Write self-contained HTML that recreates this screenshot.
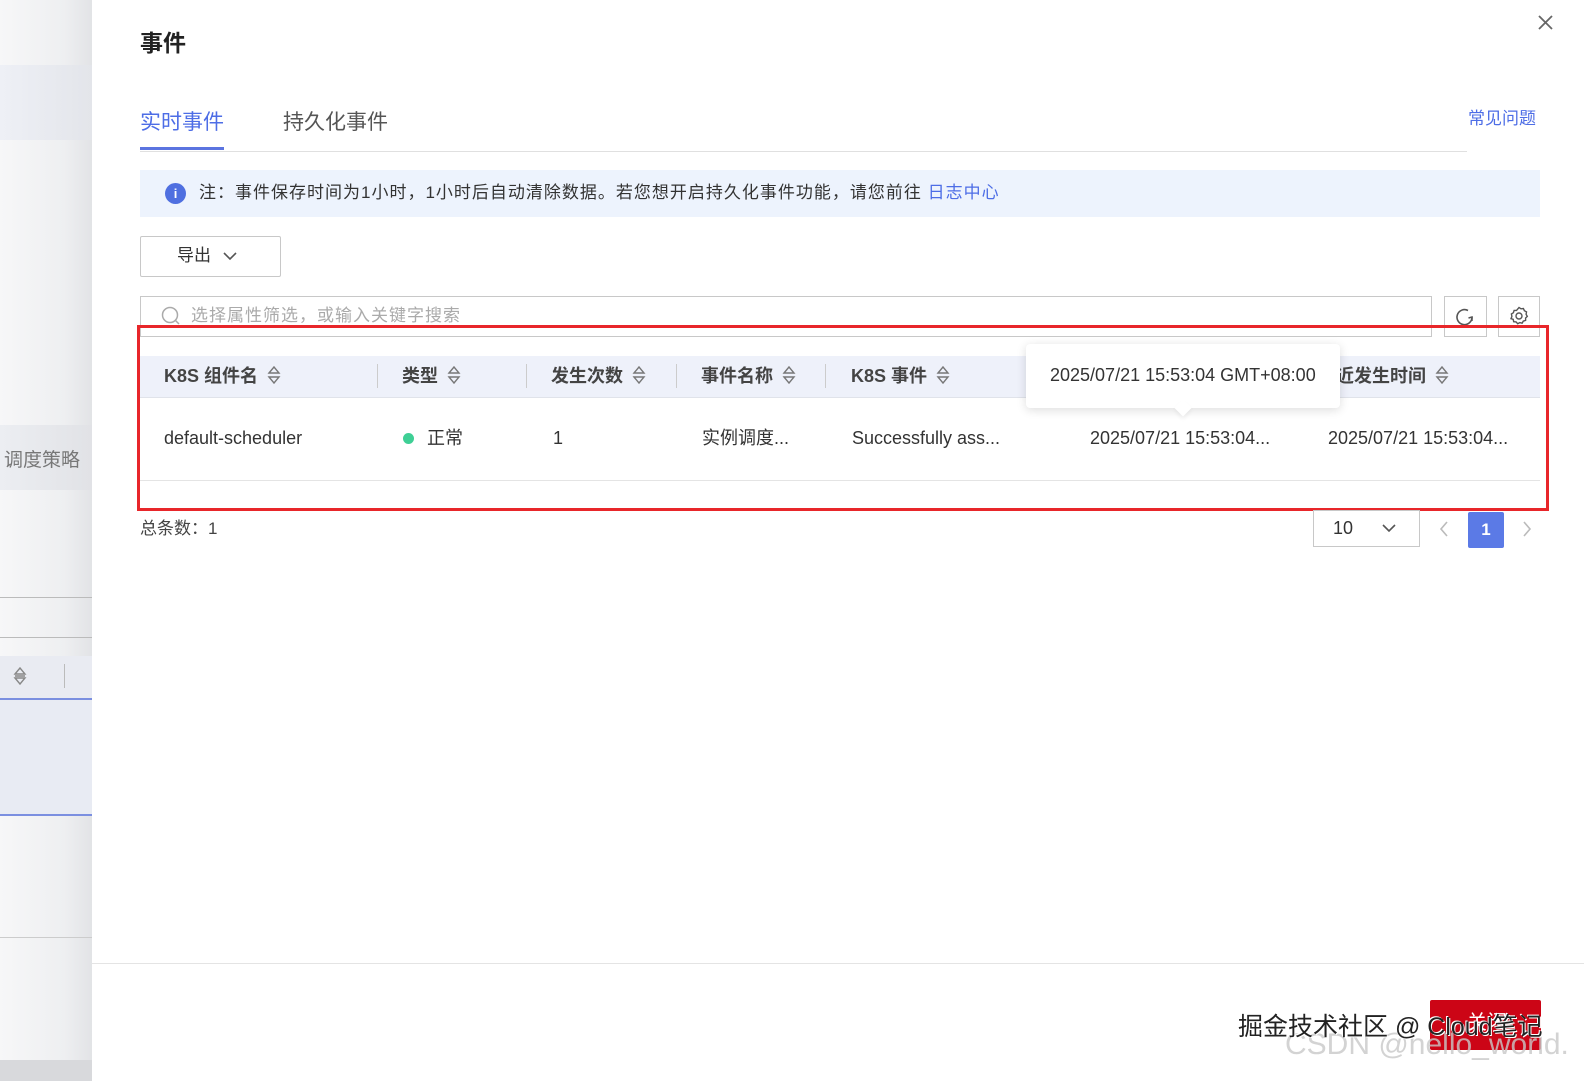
<!DOCTYPE html>
<html><head><meta charset="utf-8"><style>
*{margin:0;padding:0;box-sizing:border-box}
body{width:1584px;height:1081px;position:relative;overflow:hidden;background:#fff;font-family:"Liberation Sans","Noto Sans CJK SC",sans-serif;color:#333}
.a{position:absolute;white-space:nowrap;line-height:22px}
.left{position:absolute;left:0;top:0;width:92px;height:1081px;background:linear-gradient(90deg,#f7f7f8 0%,#eeeff1 70%,#e2e3e6 100%)}
.sort{display:inline-block;vertical-align:-3px;margin-left:8px}
.hd{font-size:18px;font-weight:bold;color:#444;top:365px}
.sep{position:absolute;top:364px;width:1px;height:24px;background:#ccc}
.cell{font-size:18px;color:#333;top:427px}
</style></head><body>
<div class="left">
  <div class="a" style="left:0;top:65px;width:92px;height:75px;background:linear-gradient(90deg,#eef0f6,#e3e5ea)"></div>
  <div class="a" style="left:0;top:425px;width:92px;height:65px;background:linear-gradient(90deg,#eceef2,#e1e2e6)"></div>
  <div class="a" style="left:4px;top:450px;font-size:19px;color:#777">调度策略</div>
  <div class="a" style="left:0;top:597px;width:92px;height:1px;background:#bbb"></div>
  <div class="a" style="left:0;top:637px;width:92px;height:1px;background:#bbb"></div>
  <div class="a" style="left:0;top:656px;width:92px;height:42px;background:#e9ebf2"></div>
  <svg class="a" style="left:12px;top:666px" width="16" height="20"><path d="M3 8L8 2L13 8ZM3 12L8 18L13 12Z M3 10H13" stroke="#888" stroke-width="1.4" fill="none"/></svg>
  <div class="a" style="left:64px;top:664px;width:1px;height:24px;background:#bbb"></div>
  <div class="a" style="left:0;top:698px;width:92px;height:118px;background:#e8ebf3;border-top:2px solid #7b8fe0;border-bottom:2px solid #7b8fe0"></div>
  <div class="a" style="left:0;top:937px;width:92px;height:1px;background:#ccc"></div>
  <div class="a" style="left:0;top:1060px;width:92px;height:21px;background:#d8d9dc"></div>
</div>

<div class="a" style="left:140px;top:32px;font-size:23px;font-weight:bold;color:#222">事件</div>
<svg class="a" style="left:1537px;top:14px" width="17" height="17"><path d="M2 2L15 15M15 2L2 15" stroke="#666" stroke-width="1.8"/></svg>

<div class="a" style="left:140px;top:112px;font-size:21px;color:#4d6de6">实时事件</div>
<div class="a" style="left:283px;top:112px;font-size:21px;color:#555">持久化事件</div>
<div class="a" style="left:140px;top:151px;width:1327px;height:1px;background:#e0e0e0"></div>
<div class="a" style="left:140px;top:147px;width:84px;height:3px;background:#5b74e0"></div>
<div class="a" style="left:1468px;top:108px;font-size:17px;color:#4d6de6">常见问题</div>

<div class="a" style="left:140px;top:170px;width:1400px;height:47px;background:#edf3fd"></div>
<div class="a" style="left:165px;top:183px;width:21px;height:21px;border-radius:50%;background:#4f6fe0;color:#fff;font-size:13px;font-weight:bold;text-align:center;line-height:21px">i</div>
<div class="a" style="left:199px;top:182px;font-size:17px;letter-spacing:1px;color:#333">注：事件保存时间为1小时，1小时后自动清除数据。若您想开启持久化事件功能，请您前往 <span style="color:#4d6de6">日志中心</span></div>

<div class="a" style="left:140px;top:236px;width:141px;height:41px;border:1px solid #c8c8c8;border-radius:2px"></div>
<div class="a" style="left:177px;top:245px;font-size:17px;color:#333">导出</div>
<svg class="a" style="left:222px;top:250px" width="16" height="12"><path d="M2 3L8 9L14 3" stroke="#555" stroke-width="1.6" fill="none"/></svg>

<div class="a" style="left:140px;top:296px;width:1292px;height:41px;border:1px solid #c8c8c8"></div>
<svg class="a" style="left:160px;top:305px" width="22" height="22"><circle cx="10" cy="10" r="7.5" stroke="#aaa" stroke-width="1.5" fill="none"/><path d="M15.5 15.5L19 19" stroke="#aaa" stroke-width="1.5"/></svg>
<div class="a" style="left:191px;top:305px;font-size:17px;color:#aaa;letter-spacing:1px">选择属性筛选，或输入关键字搜索</div>
<div class="a" style="left:1444px;top:296px;width:43px;height:41px;border:1px solid #c8c8c8"></div>
<svg class="a" style="left:1453px;top:305px" width="24" height="24"><path d="M19 12A7.5 7.5 0 1 1 15 5.5" stroke="#555" stroke-width="1.6" fill="none"/><path d="M19 16L19 12L15.5 13" stroke="#555" stroke-width="1.5" fill="none"/></svg>
<div class="a" style="left:1498px;top:296px;width:42px;height:41px;border:1px solid #c8c8c8"></div>
<svg class="a" style="left:1508px;top:305px" width="22" height="22"><path d="M11 2.5l2 1.3 2.4-.3 1 2.2 2.1 1.2-.4 2.4 1.2 2.1-1.7 1.6v2.4l-2.3.7-1.2 2.1-2.3-.6-2.1 1.1-1.6-1.8-2.4-.2-.5-2.4L3 13.7l.9-2.3-.5-2.4 2-1.3.7-2.3h2.4z" stroke="#555" stroke-width="1.4" fill="none"/><circle cx="11" cy="11" r="3" stroke="#555" stroke-width="1.4" fill="none"/></svg>

<div class="a" style="left:140px;top:356px;width:1400px;height:42px;background:#eef1fa;border-bottom:1px solid #e0e3ea"></div>
<div class="a hd" style="left:164px">K8S 组件名<svg class="sort" width="16" height="20"><path d="M3 8L8 2L13 8ZM3 12L8 18L13 12Z" stroke="#777" stroke-width="1.4" fill="none"/></svg></div>
<div class="sep" style="left:377px"></div>
<div class="a hd" style="left:402px">类型<svg class="sort" width="16" height="20"><path d="M3 8L8 2L13 8ZM3 12L8 18L13 12Z" stroke="#777" stroke-width="1.4" fill="none"/></svg></div>
<div class="sep" style="left:526px"></div>
<div class="a hd" style="left:551px">发生次数<svg class="sort" width="16" height="20"><path d="M3 8L8 2L13 8ZM3 12L8 18L13 12Z" stroke="#777" stroke-width="1.4" fill="none"/></svg></div>
<div class="sep" style="left:676px"></div>
<div class="a hd" style="left:701px">事件名称<svg class="sort" width="16" height="20"><path d="M3 8L8 2L13 8ZM3 12L8 18L13 12Z" stroke="#777" stroke-width="1.4" fill="none"/></svg></div>
<div class="sep" style="left:825px"></div>
<div class="a hd" style="left:851px">K8S 事件<svg class="sort" width="16" height="20"><path d="M3 8L8 2L13 8ZM3 12L8 18L13 12Z" stroke="#777" stroke-width="1.4" fill="none"/></svg></div>
<div class="a hd" style="left:1318px">最近发生时间<svg class="sort" width="16" height="20"><path d="M3 8L8 2L13 8ZM3 12L8 18L13 12Z" stroke="#777" stroke-width="1.4" fill="none"/></svg></div>

<div class="a cell" style="left:164px">default-scheduler</div>
<div class="a" style="left:403px;top:433px;width:11px;height:11px;border-radius:50%;background:#3ecf95"></div>
<div class="a cell" style="left:427px">正常</div>
<div class="a cell" style="left:553px">1</div>
<div class="a cell" style="left:702px">实例调度...</div>
<div class="a cell" style="left:852px">Successfully ass...</div>
<div class="a cell" style="left:1090px">2025/07/21 15:53:04...</div>
<div class="a cell" style="left:1328px">2025/07/21 15:53:04...</div>
<div class="a" style="left:140px;top:480px;width:1400px;height:1px;background:#e4e4e4"></div>

<div class="a" style="left:1026px;top:344px;width:314px;height:64px;background:#fff;border-radius:4px;box-shadow:0 2px 10px rgba(0,0,0,.14)"></div>
<div class="a" style="left:1177px;top:402px;width:12px;height:12px;background:#fff;transform:rotate(45deg);box-shadow:2px 2px 4px rgba(0,0,0,.06)"></div>
<div class="a" style="left:1050px;top:364px;font-size:18px;color:#333">2025/07/21 15:53:04 GMT+08:00</div>

<div class="a" style="left:137px;top:325px;width:1412px;height:186px;border:3px solid #e8262a"></div>

<div class="a" style="left:140px;top:518px;font-size:17px;color:#444">总条数：1</div>
<div class="a" style="left:1313px;top:510px;width:107px;height:37px;border:1px solid #c8c8c8"></div>
<div class="a" style="left:1333px;top:517px;font-size:18px;color:#333">10</div>
<svg class="a" style="left:1381px;top:522px" width="16" height="12"><path d="M2 3L8 9L14 3" stroke="#555" stroke-width="1.6" fill="none"/></svg>
<svg class="a" style="left:1438px;top:520px" width="12" height="18"><path d="M9 2L3 9L9 16" stroke="#bbb" stroke-width="1.6" fill="none"/></svg>
<div class="a" style="left:1468px;top:512px;width:36px;height:36px;background:#5b7ae6;border-radius:2px;color:#fff;font-weight:bold;font-size:17px;text-align:center;line-height:36px">1</div>
<svg class="a" style="left:1521px;top:520px" width="12" height="18"><path d="M3 2L9 9L3 16" stroke="#bbb" stroke-width="1.6" fill="none"/></svg>

<div class="a" style="left:92px;top:963px;width:1492px;height:1px;background:#e4e4e4"></div>
<div class="a" style="left:1430px;top:1000px;width:111px;height:50px;background:#cc0516;border-radius:2px"></div>
<div class="a" style="left:1467px;top:1012px;font-size:20px;color:#fff">关闭</div>
<div class="a" style="left:1285px;top:1028px;font-size:30px;line-height:34px;color:rgba(200,200,200,.8)">CSDN @hello_world.</div>
<div class="a" style="left:1238px;top:1012px;font-size:25px;line-height:30px;color:#222;text-shadow:1px 1px 0 #fff,-1px -1px 0 #fff">掘金技术社区 @ Cloud笔记</div>
</body></html>
